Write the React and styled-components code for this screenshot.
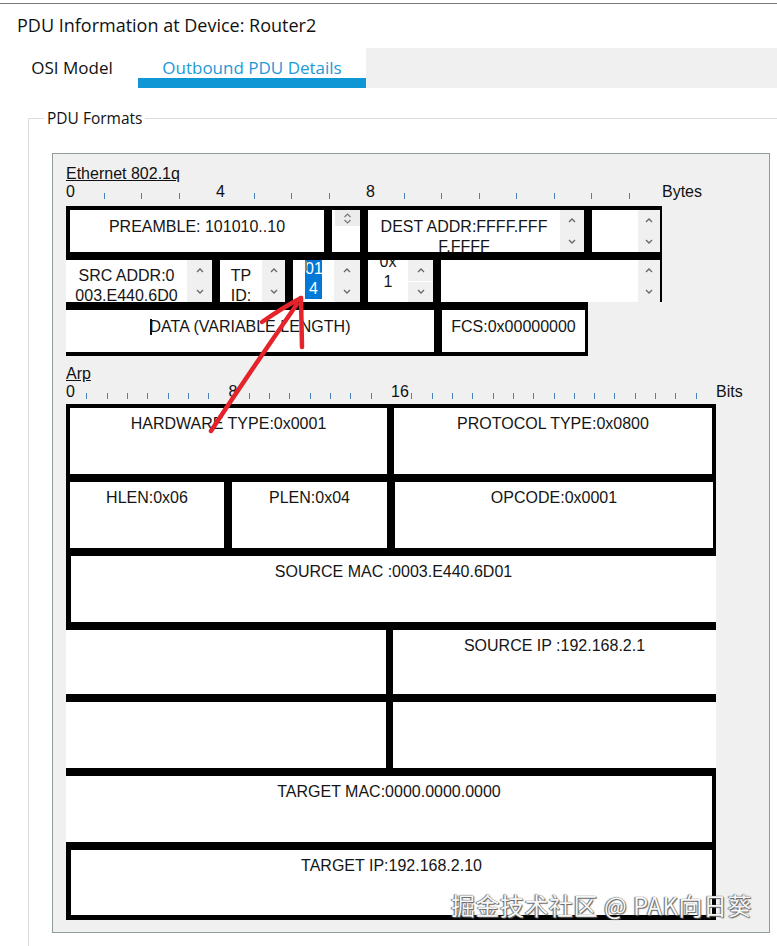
import React from 'react';
import styled, { createGlobalStyle } from 'styled-components';

const Global = createGlobalStyle`
  html, body { margin: 0; padding: 0; background: #fff; }
  body { width: 777px; height: 946px; overflow: hidden; }
`;

const Window = styled.div`
  position: relative;
  width: 777px;
  height: 946px;
  overflow: hidden;
  background: #fff;
`;

const TopRule = styled.div`
  height: 1px;
  margin-top: 3px;
  background: #787878;
`;

const Title = styled.h1`
  margin: 0;
  padding: 9px 0 0 17px;
  font: 400 18px/24px "Open Sans", "Noto Sans", sans-serif;
  color: #111;
`;

const TabBar = styled.div`
  display: flex;
  height: 40px;
  margin-top: 11px;
  padding-left: 6px;
`;

const Tab = styled.div`
  flex: 0 0 ${p => p.$w}px;
  box-sizing: border-box;
  height: 40px;
  padding-top: 8px;
  text-align: center;
  font: 400 17px/23px "Open Sans", "Noto Sans", sans-serif;
  color: ${p => (p.$active ? '#1c9ad6' : '#111')};
  border-bottom: 10px solid ${p => (p.$active ? '#0f97d5' : 'transparent')};
`;

const TabFill = styled.div`
  flex: 1;
  background: #f0f0f0;
`;

const Group = styled.div`
  position: relative;
  margin: 30px -20px 0 28px;
  height: 900px;
  padding: 34px 0 0 23px;
  border-top: 1px solid #dcdcdc;
  border-left: 1px solid #dcdcdc;
`;

const GroupLabel = styled.span`
  position: absolute;
  top: -11px;
  left: 15px;
  padding: 0 3px;
  background: #fff;
  font: 400 15.5px/21px "Open Sans", "Noto Sans", sans-serif;
  color: #111;
`;

const Panel = styled.div`
  width: 718px;
  box-sizing: border-box;
  border: 1px solid #8e9c9c;
  background: #f0f0f0;
  padding: 11px 0 12px 13px;
`;

const Section = styled.div`
  margin-top: ${p => p.$mt || 0}px;
`;

const SectionLabel = styled.div`
  font: 16px/18px "Liberation Sans", Arial, sans-serif;
  text-decoration: underline;
  color: #111;
`;

const Ruler = styled.div`
  display: flex;
  height: 18px;
  margin-bottom: ${p => p.$mb}px;
  font: 16px/18px "Liberation Sans", Arial, sans-serif;
  color: #111;
`;

const RulerUnit = styled.div`
  flex: 0 0 ${p => p.$w}px;
  height: 18px;
  display: flex;
  align-items: flex-end;
`;

const RulerNum = styled.span`
  align-self: flex-start;
  line-height: 18px;
  white-space: nowrap;
`;

const RulerEnd = styled.span`
  margin-left: ${p => p.$ml || 0}px;
  line-height: 18px;
`;

const Tick = styled.span`
  width: 1px;
  height: 6px;
  margin-bottom: 2.5px;
  background: #4a82b8;
`;

const Grid = styled.div`
  display: flex;
  flex-direction: column;
  align-items: flex-start;
`;

const Row = styled.div`
  display: flex;
  gap: ${p => (p.$gap == null ? 8 : p.$gap)}px;
  background: #000;
  width: ${p => p.$w}px;
  box-sizing: border-box;
  padding: ${p => p.$pt || 0}px ${p => p.$pr || 0}px ${p => p.$pb || 0}px ${p => p.$pl || 0}px;
`;

const Cell = styled.div`
  flex: ${p => (p.$w ? `0 0 ${p.$w}px` : '1 1 0')};
  height: ${p => p.$h}px;
  display: flex;
  overflow: hidden;
  background: #fff;
`;

const CellText = styled.div`
  flex: 1;
  min-width: 0;
  margin-top: ${p => (p.$mt == null ? 6 : p.$mt)}px;
  text-align: center;
  white-space: pre;
  font: 16px/20px "Liberation Sans", Arial, sans-serif;
  color: #151515;
`;

const SpinBox = styled.div`
  flex: 0 0 ${p => p.$w}px;
  display: flex;
  flex-direction: column;
  background: #f0f0f0;
`;

const SpinHalf = styled.div`
  flex: 1;
  display: flex;
  align-items: center;
  justify-content: center;
  border-top: ${p => (p.$split ? '1px solid #fff' : '0')};
`;

const MiniBox = styled.div`
  align-self: flex-start;
  margin-left: auto;
  width: 25px;
  height: 16px;
  display: flex;
  align-items: center;
  justify-content: center;
  background: #ececec;
`;

const Caret = styled.span`
  position: relative;
  z-index: 1;
  display: inline-block;
  vertical-align: top;
  width: ${p => p.$wd}px;
  height: ${p => p.$h}px;
  margin-top: ${p => p.$mt}px;
  margin-right: -${p => p.$wd}px;
  background: ${p => p.$c};
`;

const Sel = styled.span`
  display: inline-block;
  width: 17px;
  background: #0078d7;
  color: #fff;
  text-align: center;
`;

const Overlay = styled.svg`
  position: absolute;
  left: 0;
  top: 0;
  pointer-events: none;
`;

const Watermark = styled.div`
  position: absolute;
  left: 451px;
  top: 893px;
  font: 400 24px/24px "Noto Sans CJK SC", "Noto Sans", sans-serif;
  letter-spacing: 0.5px;
  color: #f7f7f7;
  white-space: nowrap;
  text-shadow: 0 0 1px #444, 1px 1px 1px #666, -1px 0 1px #777;
`;

const Chevron = ({ down }) => (
  <svg width="8" height="5" viewBox="0 0 8 5">
    <polyline
      points={down ? '1,1 4,4 7,1' : '1,4 4,1 7,4'}
      fill="none"
      stroke="#666"
      strokeWidth="1.3"
    />
  </svg>
);

const MiniArrows = () => (
  <svg width="9" height="11" viewBox="0 0 9 11">
    <polyline points="1.5,4 4.5,1 7.5,4" fill="none" stroke="#777" strokeWidth="1.2" />
    <polyline points="1.5,7 4.5,10 7.5,7" fill="none" stroke="#777" strokeWidth="1.2" />
  </svg>
);

const Spinner = ({ w, split }) => (
  <SpinBox $w={w}>
    <SpinHalf><Chevron /></SpinHalf>
    <SpinHalf $split={split}><Chevron down /></SpinHalf>
  </SpinBox>
);

const RulerBar = ({ units, unitW, labels, end, endMl, mb }) => (
  <Ruler $mb={mb}>
    {Array.from({ length: units }, (_, i) => (
      <RulerUnit key={i} $w={unitW}>
        {labels[i] != null ? <RulerNum>{labels[i]}</RulerNum> : <Tick />}
      </RulerUnit>
    ))}
    <RulerEnd $ml={endMl}>{end}</RulerEnd>
  </Ruler>
);

const Field = ({ w, h, mt, text, spin, split, children }) => (
  <Cell $w={w} $h={h}>
    <CellText $mt={mt}>{children != null ? children : text}</CellText>
    {spin ? <Spinner w={spin} split={split} /> : null}
  </Cell>
);

const Ethernet = () => (
  <Section>
    <SectionLabel>Ethernet 802.1q</SectionLabel>
    <RulerBar units={16} unitW={37.5} labels={{ 0: '0', 4: '4', 8: '8' }} end="Bytes" endMl={-4} mb={5} />
    <Grid>
      <Row $w={596} $pt={4} $pl={4} $pr={2}>
        <Field w={254} h={42} mt={7} text="PREAMBLE: 101010..10" />
        <Cell $w={28} $h={42}>
          <MiniBox><MiniArrows /></MiniBox>
        </Cell>
        <Field w={216} h={42} mt={7} text={'DEST ADDR:FFFF.FFF\nF.FFFF'} spin={24} />
        <Field w={68} h={42} text="" spin={22} />
      </Row>
      <Row $w={596} $pt={8} $pr={2}>
        <Field w={146} h={42} mt={6} text={'SRC ADDR:0\n003.E440.6D0'} spin={25} />
        <Field w={65} h={42} mt={6} text={'TP\nID:'} spin={23} />
        <Field w={67} h={42} mt={-1} spin={26}>
          <Caret $wd={2} $h={10} $mt={2} $c="#8a8a5c" />
          <Sel>01</Sel>
          {'\n'}
          <Sel>4</Sel>
        </Field>
        <Field w={65} h={42} mt={-8} text={'0x\n1'} spin={25} split />
        <Field w={219} h={42} text="" spin={22} />
      </Row>
      <Row $w={522} $pt={8} $pb={4} $pr={3}>
        <Field w={368} h={42} mt={7}>
          <Caret $wd={2} $h={16} $mt={2} $c="#111" />
          DATA (VARIABLE LENGTH)
        </Field>
        <Field w={143} h={42} mt={7} text="FCS:0x00000000" />
      </Row>
    </Grid>
  </Section>
);

const Arp = () => (
  <Section $mt={9}>
    <SectionLabel>Arp</SectionLabel>
    <RulerBar units={32} unitW={650 / 32} labels={{ 0: '0', 8: '8', 16: '16' }} end="Bits" mb={3} />
    <Grid>
      <Row $w={650} $pt={4} $pl={4} $pr={4} $gap={7}>
        <Field w={317} h={66} text="HARDWARE TYPE:0x0001" />
        <Field h={66} text="PROTOCOL TYPE:0x0800" />
      </Row>
      <Row $w={650} $pt={8} $pl={4} $pr={4} $gap={8}>
        <Field w={154} h={66} text="HLEN:0x06" />
        <Field w={155} h={66} text="PLEN:0x04" />
        <Field w={318} h={66} text="OPCODE:0x0001" />
      </Row>
      <Row $w={650} $pt={8} $pl={5}>
        <Field h={66} text="SOURCE MAC :0003.E440.6D01" />
      </Row>
      <Row $w={650} $pt={8} $gap={7}>
        <Field w={320} h={64} text="" />
        <Field h={64} text="SOURCE IP :192.168.2.1" />
      </Row>
      <Row $w={650} $pt={8} $gap={7}>
        <Field w={320} h={66} text="" />
        <Field h={66} text="" />
      </Row>
      <Row $w={650} $pt={8} $pr={4}>
        <Field h={66} text="TARGET MAC:0000.0000.0000" />
      </Row>
      <Row $w={650} $pt={8} $pl={5} $pr={4} $pb={5}>
        <Field h={65} text="TARGET IP:192.168.2.10" />
      </Row>
    </Grid>
  </Section>
);

export default function App() {
  return (
    <Window>
      <Global />
      <TopRule />
      <Title>PDU Information at Device: Router2</Title>
      <TabBar>
        <Tab $w={132}>OSI Model</Tab>
        <Tab $w={228} $active>Outbound PDU Details</Tab>
        <TabFill />
      </TabBar>
      <Group>
        <GroupLabel>PDU Formats</GroupLabel>
        <Panel>
          <Ethernet />
          <Arp />
        </Panel>
      </Group>
      <Overlay width="777" height="946" viewBox="0 0 777 946">
        <g fill="none" stroke="#e5232b" strokeWidth="4.5" strokeLinecap="round" strokeLinejoin="round">
          <path d="M211 431 Q250 372 297 304" />
          <path d="M262 322 Q282 308 301 298" />
          <path d="M301 298 L302 347" />
        </g>
      </Overlay>
      <Watermark>掘金技术社区 @ PAK向日葵</Watermark>
    </Window>
  );
}
